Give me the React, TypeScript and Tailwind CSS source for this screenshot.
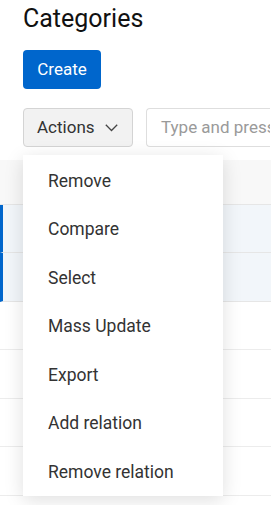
import React from "react";

const actions = [
  "Remove",
  "Compare",
  "Select",
  "Mass Update",
  "Export",
  "Add relation",
  "Remove relation",
];

const rows = [true, true, false, false, false, false];

const App = () => {
  return (
    <div className="relative w-[271px] h-[505px] overflow-hidden bg-white font-['Roboto',sans-serif]">
      <div className="pl-[23px] pt-[4px]">
        <h1 className="text-[25px] leading-[30px] text-[#111]">Categories</h1>
        <button
          type="button"
          className="mt-[16px] h-[39px] w-[78px] rounded-[4px] bg-[#0066cc] text-[17px] text-white"
        >
          Create
        </button>
        <div className="mt-[19px] flex gap-[13px]">
          <button
            type="button"
            className="flex h-[39px] w-[110px] shrink-0 items-center gap-[10px] rounded-[4px] border border-[#d4d4d4] bg-[#f2f2f2] pl-[13px] text-[17px] text-[#333]"
          >
            Actions
            <svg width="13" height="8" viewBox="0 0 13 8" fill="none">
              <polyline points="0.8,0.8 6.5,6.5 12.2,0.8" stroke="#444" strokeWidth="1.3" />
            </svg>
          </button>
          <div className="flex h-[39px] w-[124px] shrink-0 items-center overflow-hidden whitespace-nowrap rounded-l-[4px] border border-r-0 border-[#dedede] pl-[14px] text-[17px] text-[#9a9a9a]">
            Type and press
          </div>
        </div>
      </div>

      <div className="mt-[13px]">
        <div className="h-[44.5px] border-b border-[#e6e6e6] bg-[#f8f8f8]" />
        {rows.map((sel, i) => (
          <div
            key={i}
            className={
              sel
                ? "h-[48.6px] border-b border-[#e6e6e6] border-l-[3px] border-l-[#0066cc] bg-[#f2f6fa]"
                : "h-[48.6px] border-b border-[#ececec]"
            }
          />
        ))}
      </div>

      <div className="absolute left-[23px] top-[155px] w-[200px] pt-[1.5px] bg-white shadow-[0_4px_18px_rgba(0,0,0,0.13)]">
        {actions.map((a) => (
          <div key={a} className="flex h-[48.5px] items-center pl-[25px] text-[17.5px] text-[#333]">
            {a}
          </div>
        ))}
      </div>
    </div>
  );
};

export default App;
